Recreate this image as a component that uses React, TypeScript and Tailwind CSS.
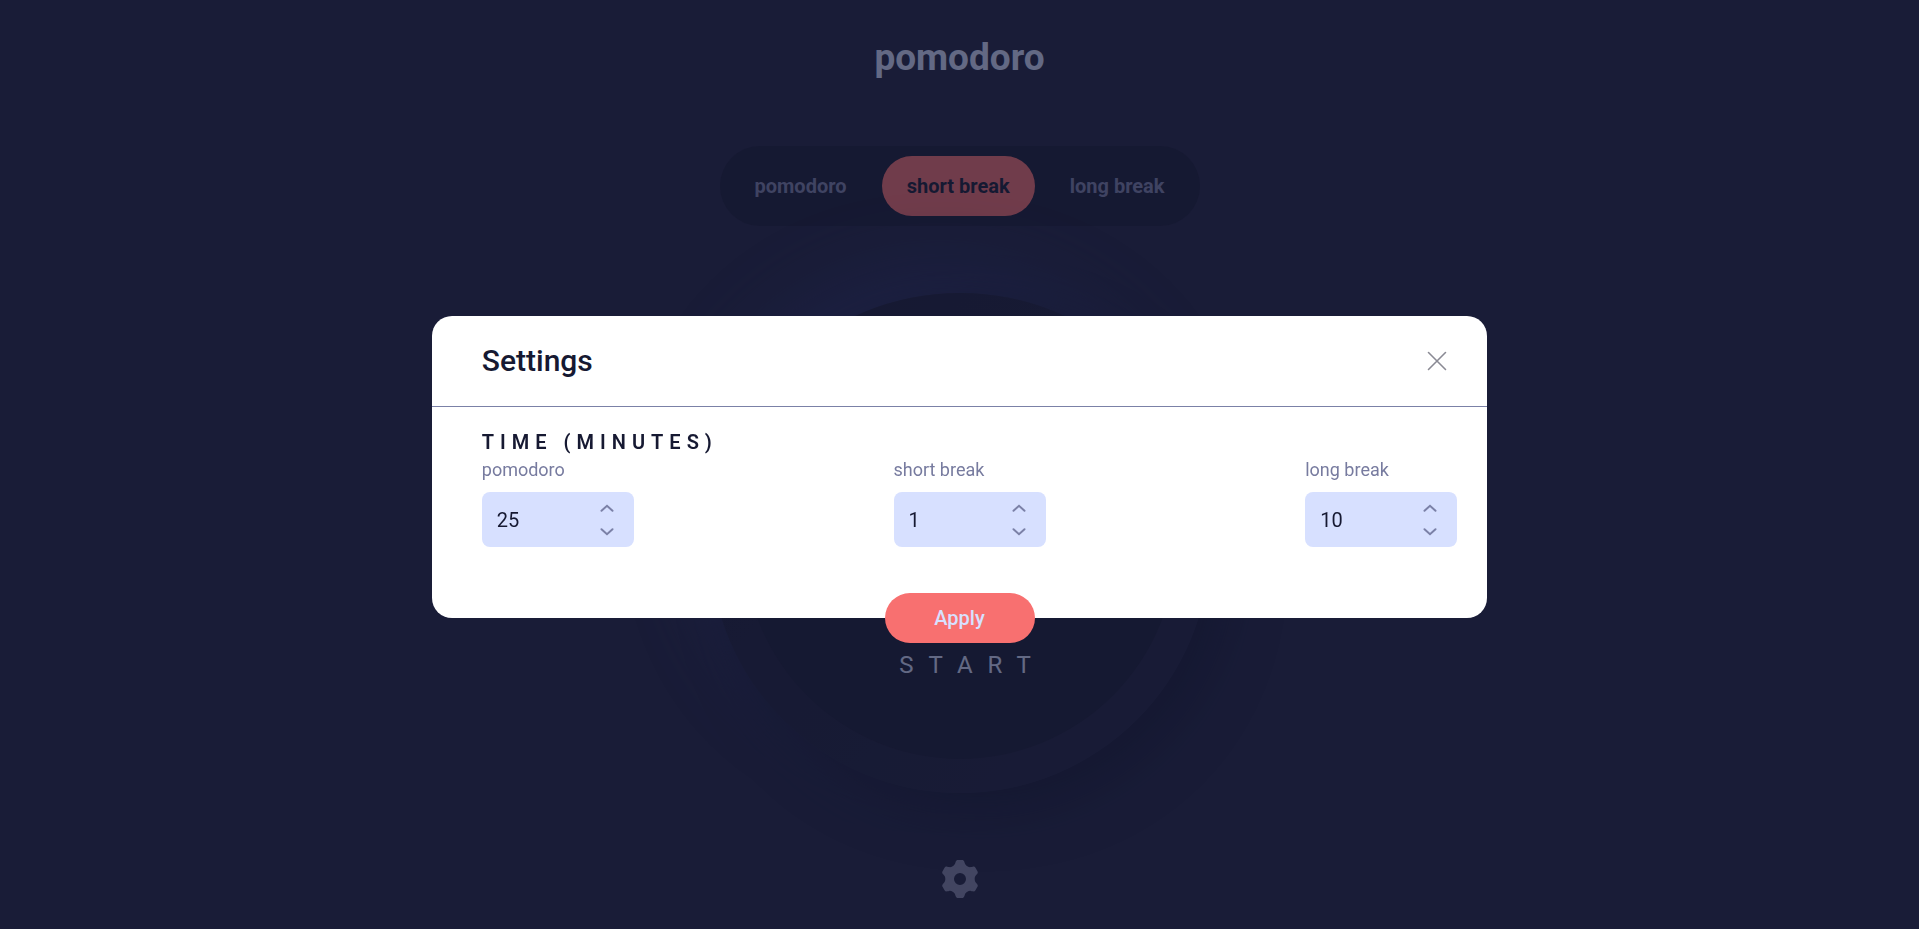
import { useState } from "react";

const tabs = ["pomodoro", "short break", "long break"];

function gearOutline() {
  const tooth = [
    [-6.2, -13.4], [-5.3, -14.2], [-4.9, -15.4],
    [-4.7, -16], [-4.5, -16.6], [-4.3, -17.2],
    [-3.9, -18.4], [-3.2, -19], [-2, -19],
    [-0.7, -19], [0.7, -19], [2, -19],
    [3.2, -19], [3.9, -18.4], [4.3, -17.2],
    [4.5, -16.6], [4.7, -16], [4.9, -15.4],
    [5.3, -14.2], [6.2, -13.4], [7.35, -12.73],
  ];
  const points = [0, 60, 120, 180, 240, 300].flatMap((deg) => {
    const a = (deg * Math.PI) / 180;
    return tooth.map(
      ([x, y]) => `${(x * Math.cos(a) - y * Math.sin(a)).toFixed(2)} ${(x * Math.sin(a) + y * Math.cos(a)).toFixed(2)}`,
    );
  });
  return `M-7.35 -12.73C${points.join(" ")}ZM0 -6A6 6 0 1 0 0 6A6 6 0 1 0 0 -6Z`;
}

const gearPath = gearOutline();

function Gear() {
  return (
    <svg width="38" height="38" viewBox="-19 -19 38 38" fill="currentColor" aria-hidden="true">
      <path d={gearPath} fillRule="evenodd" />
    </svg>
  );
}

function Chevron({ down = false }: { down?: boolean }) {
  return (
    <svg width="14" height="8" viewBox="0 0 14 8" fill="none" aria-hidden="true">
      <path
        d={down ? "M1.5 1.2 7 6.2 12.5 1.2" : "M1.5 6.8 7 1.8 12.5 6.8"}
        stroke="#7b81a7"
        strokeWidth="2"
        strokeLinecap="round"
      />
    </svg>
  );
}

function TimeField({ id, label, initial }: { id: string; label: string; initial: number }) {
  const [value, setValue] = useState(initial);
  return (
    <div className="flex flex-col gap-[10px]">
      <label htmlFor={id} className="text-lg leading-6 text-[#777b9f]">
        {label}
      </label>
      <div className="flex h-[55px] w-[152px] items-center justify-between rounded-lg bg-[#d7e0ff] pr-5 pl-[15px]">
        <input
          id={id}
          type="number"
          min={1}
          value={value}
          onChange={(e) => setValue(Number(e.target.value))}
          className="w-16 [appearance:textfield] bg-transparent text-xl text-[#161932] outline-none [&::-webkit-inner-spin-button]:appearance-none"
        />
        <div className="flex flex-col gap-4">
          <button type="button" aria-label={`Increase ${label}`} onClick={() => setValue(value + 1)}>
            <Chevron />
          </button>
          <button type="button" aria-label={`Decrease ${label}`} onClick={() => setValue(Math.max(1, value - 1))}>
            <Chevron down />
          </button>
        </div>
      </div>
    </div>
  );
}

function Timer() {
  return (
    <main className="flex min-h-screen flex-col items-center bg-[#1e213f] pt-8 pb-6 text-[#d7e0ff]">
      <h1 className="text-[37px] leading-[52px] font-bold">pomodoro</h1>
      <nav className="mt-[62px] flex h-20 w-[480px] items-center justify-between rounded-full bg-[#161932] px-[10px]">
        {tabs.map((tab) => (
          <button
            key={tab}
            type="button"
            className={
              tab === "short break"
                ? "h-15 rounded-full bg-[#f87070] px-[25px] text-xl font-bold text-[#161932]"
                : "h-15 rounded-full px-[25px] text-xl font-bold text-[#7d83aa]"
            }
          >
            {tab}
          </button>
        ))}
      </nav>
      <div className="mt-[67px] flex size-[500px] items-center justify-center rounded-full bg-linear-to-br from-[#161932] to-[#1e213f] shadow-[20px_20px_50px_#141731,-20px_-30px_60px_#272c5a]">
        <div className="flex size-[432px] flex-col items-center justify-end rounded-full bg-[#161932] pb-[78px]">
          <button type="button" className="pl-[26px] text-2xl leading-8 tracking-[15px]">
            START
          </button>
        </div>
      </div>
      <button type="button" aria-label="Open settings" className="mt-[67px] text-[#8487a7]">
        <Gear />
      </button>
    </main>
  );
}

function Settings() {
  return (
    <div className="fixed inset-0 flex items-center justify-center bg-[#161932]/60">
      <section role="dialog" aria-labelledby="settings-title" className="mt-[5px] flex w-[55%] flex-col rounded-[20px] bg-white text-[#161932]">
        <header className="flex h-[91px] items-center justify-between border-b border-[#7b81a7] pr-10 pl-[50px]">
          <h2 id="settings-title" className="text-3xl font-medium">
            Settings
          </h2>
          <button type="button" aria-label="Close settings">
            <svg width="20" height="20" viewBox="0 0 20 20" fill="none" stroke="#8a8a94" strokeWidth="1.6" strokeLinecap="round">
              <path d="M1.5 1.5 18.5 18.5M18.5 1.5 1.5 18.5" />
            </svg>
          </button>
        </header>
        <form className="flex flex-col" onSubmit={(e) => e.preventDefault()}>
          <h3 className="pt-[23px] pl-[50px] text-xl leading-6 font-semibold tracking-[6px]">TIME (MINUTES)</h3>
          <div className="mt-1 flex justify-between pr-[30px] pl-[50px]">
            <TimeField id="pomodoro" label="pomodoro" initial={25} />
            <TimeField id="short-break" label="short break" initial={1} />
            <TimeField id="long-break" label="long break" initial={10} />
          </div>
          <button type="submit" className="mt-[46px] -mb-[25px] h-[50px] w-[150px] self-center rounded-full bg-[#f87070] text-xl font-medium text-[#d7e0ff]">
            Apply
          </button>
        </form>
      </section>
    </div>
  );
}

export default function App() {
  return (
    <div className="bg-[#1e213f] font-[Roboto,sans-serif]">
      <Timer />
      <Settings />
    </div>
  );
}
